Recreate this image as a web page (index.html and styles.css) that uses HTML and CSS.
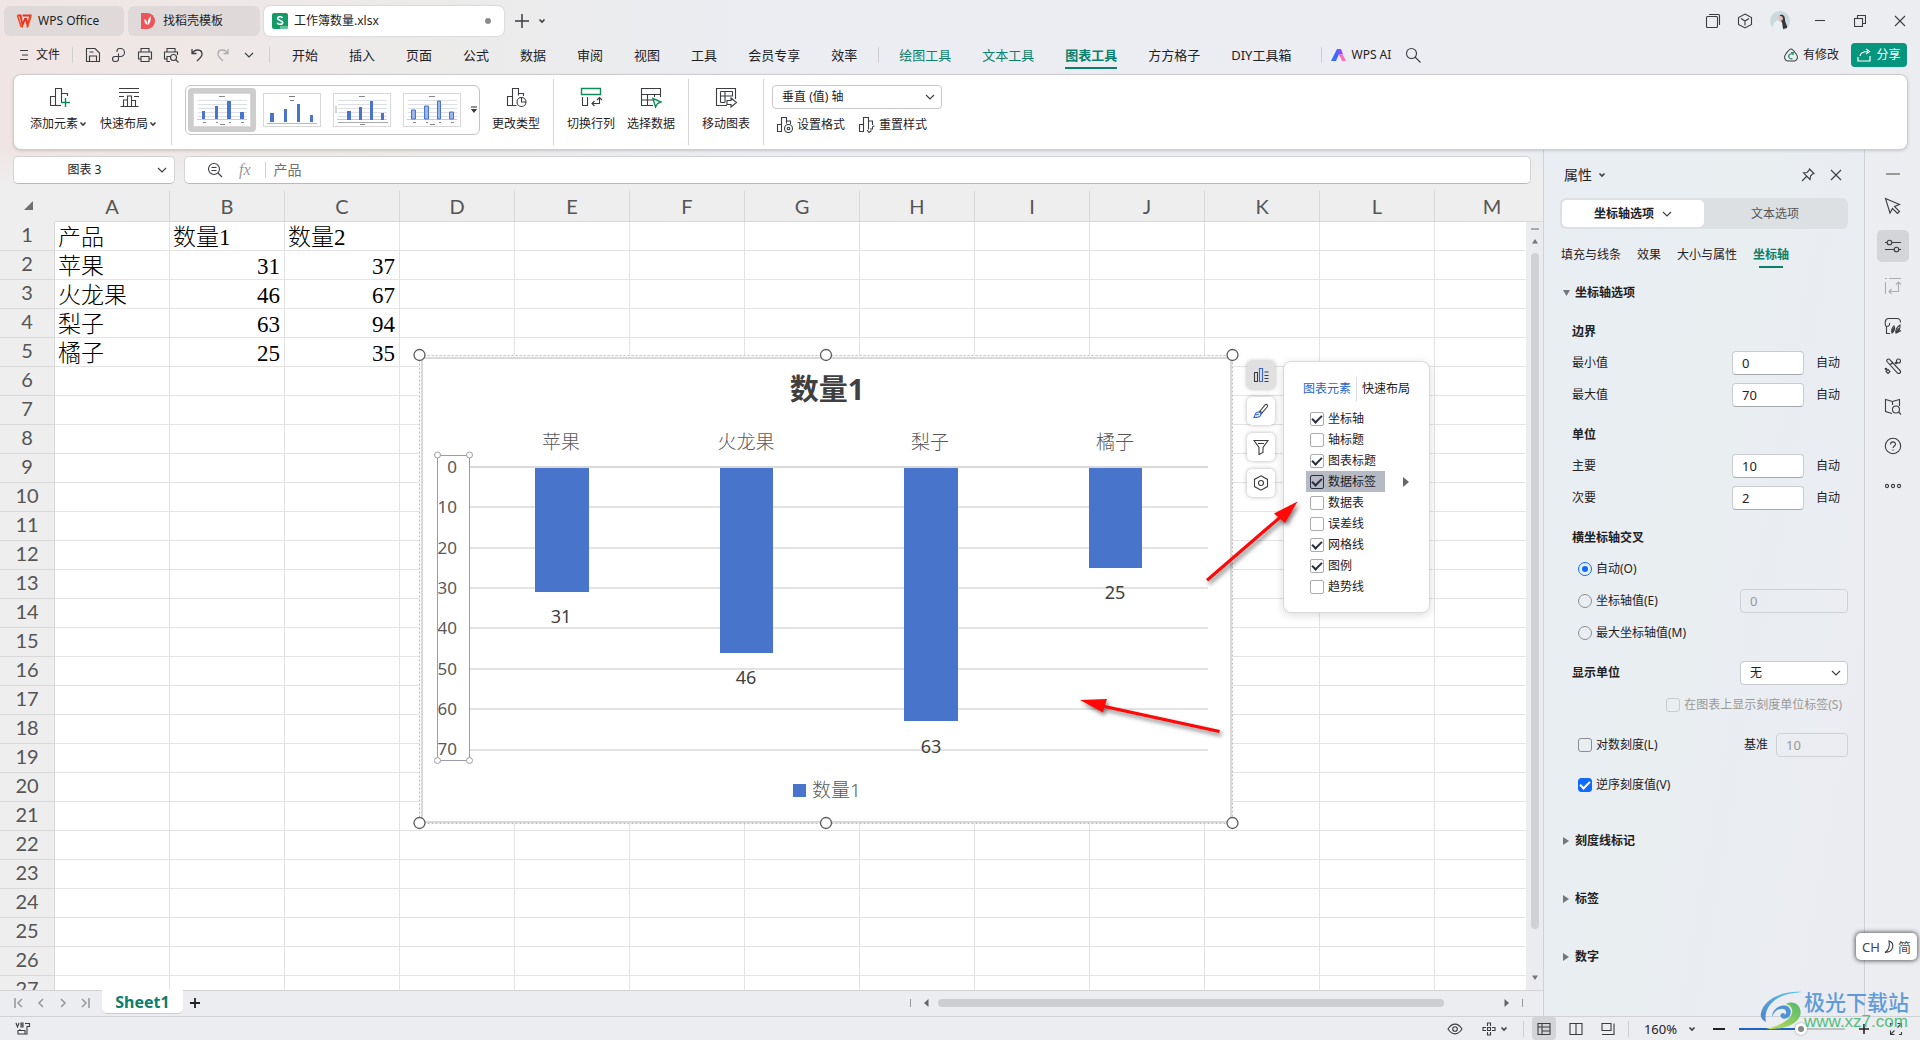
FILE: index.html
```html
<!DOCTYPE html>
<html lang="zh-CN">
<head>
<meta charset="utf-8">
<title>工作簿数量.xlsx - WPS Office</title>
<link rel="stylesheet" href="styles.css">
</head>
<body>
<svg class="defs" aria-hidden="true">
  <symbol id="chev" viewBox="0 0 10 10"><path d="M1 3l4 4 4-4"/></symbol>
  <symbol id="caret" viewBox="0 0 8 8"><path d="M1.500 2.500L4 5l2.500-2.500" stroke-width="1.600"/></symbol>
</svg>
<header class="titlebar">
  <button class="doc-tab home">
    <svg width="16" height="14" viewBox="0 0 16 14"><path d="M1.500 1.500h3L6.500 11 9 5h1l1.500 6L14.500 1.500H6.500" fill="none" stroke="#f0301e" stroke-width="1.900"/><path d="M1.500 1.500L5 12.500h1.500M10.500 12.500h1.200l3.300-11" fill="none" stroke="#fa4a1c" stroke-width="1.600"/></svg>
    <span>WPS Office</span>
  </button>
  <button class="doc-tab docer">
    <svg width="14" height="16" viewBox="0 0 14 16"><path d="M0 0h6a8 8 0 010 16H0z" fill="#ee5355"/><path d="M3.500 6c2 1 3 3 3 6-2.500-1-3.500-3-3-6zM9.500 3c.8 4-.3 7-2.300 9-1-3-.2-6 2.300-9z" fill="#fff"/></svg>
    <span>找稻壳模板</span>
  </button>
  <button class="doc-tab active">
    <svg width="16" height="16" viewBox="0 0 16 16"><rect width="16" height="16" rx="2" fill="#149a67"/><path d="M8 13h8v1a2 2 0 01-2 2H8z" fill="#5fc79b"/><path d="M10.500 5C10 3.300 5.600 3.200 5.600 5.500S10.700 7.200 10.700 9.500 5.800 11.800 5.200 9.800" fill="none" stroke="#fff" stroke-width="1.700"/></svg>
    <span>工作簿数量.xlsx</span><i class="dot"></i>
  </button>
  <button class="icon-btn" aria-label="新建"><svg class="ic" width="14" height="14" viewBox="0 0 14 14"><path d="M7 0v14M0 7h14" stroke-width="1.500"/></svg></button>
  <button class="icon-btn" aria-label="标签列表"><svg class="ic" width="8" height="8"><use href="#caret"/></svg></button>
  <div class="window-tools">
    <button class="icon-btn" aria-label="窗口"><svg class="ic" width="16" height="16" viewBox="0 0 16 16"><rect x="1.500" y="3.500" width="11" height="11" rx="1"/><path d="M4 1.500h9.500a1 1 0 011 1V12"/></svg></button>
    <button class="icon-btn" aria-label="应用"><svg class="ic" width="16" height="16" viewBox="0 0 16 16"><path d="M8 1l6.500 3.500v7L8 15l-6.500-3.500v-7zM4 5.500L8 8l4-2.500M8 8v4.500"/></svg></button>
    <button class="icon-btn avatar" aria-label="账户"><svg width="20" height="20" viewBox="0 0 20 20"><circle cx="10" cy="10" r="10" fill="#c9d9e0"/><path d="M3 17c0-5 2-7 6-8l4 4v7a10 10 0 01-10-3z" fill="#e9eff1"/><path d="M10 4c4-1 5 2 5 5s3 6 2 8l-4 1-1-7-3-2z" fill="#37343c"/><circle cx="10.500" cy="7.500" r="2.400" fill="#e8c3b4"/></svg></button>
    <button class="icon-btn win" aria-label="最小化"><svg class="ic" width="10" height="10" viewBox="0 0 10 10"><path d="M0 4.500h10"/></svg></button>
    <button class="icon-btn win" aria-label="还原"><svg class="ic" width="12" height="12" viewBox="0 0 12 12"><rect x=".5" y="3.500" width="8" height="8"/><path d="M3.500 3.500v-3h8v8h-3"/></svg></button>
    <button class="icon-btn win" aria-label="关闭"><svg class="ic" width="12" height="12" viewBox="0 0 12 12"><path d="M1 1l10 10M11 1L1 11"/></svg></button>
  </div>
</header>

<nav class="menubar">
  <button class="file-btn"><svg class="ic" width="10" height="12" viewBox="0 0 10 12"><path d="M0 1.500h8M2 6h6M0 10.500h8"/></svg>文件</button>
  <i class="vsep"></i>
  <div class="quick">
    <button class="icon-btn" aria-label="保存"><svg class="ic" width="16" height="16" viewBox="0 0 16 16"><path d="M1.500 1.500h8.500l4.500 4.500v8.500h-13zM4.500 14v-5h7v5M4.500 5h4"/></svg></button>
    <button class="icon-btn" aria-label="输出PDF"><svg class="ic" width="16" height="16" viewBox="0 0 16 16"><path d="M6 5V4a2.500 2.500 0 012.500-2.500h1a4 4 0 010 8H4a2.500 2.500 0 100 5h1a2.500 2.500 0 002.500-2.500V6.500"/></svg></button>
    <button class="icon-btn" aria-label="打印"><svg class="ic" width="16" height="16" viewBox="0 0 16 16"><path d="M4 5V1.500h8V5M4 12H1.500V5h13v7H12M4 9.500h8v5H4z"/></svg></button>
    <button class="icon-btn" aria-label="打印预览"><svg class="ic" width="16" height="16" viewBox="0 0 16 16"><path d="M4 5V1.500h8V5M4 12H1.500V5h13v3M7 14.500H4v-5h3"/><circle cx="10.500" cy="10.500" r="3"/><path d="M13 13l2.500 2.500"/></svg></button>
    <button class="icon-btn" aria-label="撤销"><svg class="ic" width="14" height="14" viewBox="0 0 14 14"><path d="M2 1v4.500h4.500M2 5.500C5 .5 12 1 12 6c0 3-3 5-5 7" stroke-width="1.300"/></svg></button>
    <button class="icon-btn faint" aria-label="恢复"><svg class="ic" width="14" height="14" viewBox="0 0 14 14"><path d="M12 1v4.500H7.500M12 5.500C9 .5 2 1 2 6c0 3 3 5 5 7" stroke-width="1.300"/></svg></button>
    <button class="icon-btn" aria-label="更多"><svg class="ic" width="10" height="10"><use href="#chev"/></svg></button>
  </div>
  <i class="vsep"></i>
  <div class="menu-tabs">
    <a href="#">开始</a><a href="#">插入</a><a href="#">页面</a><a href="#">公式</a><a href="#">数据</a><a href="#">审阅</a><a href="#">视图</a><a href="#">工具</a><a href="#">会员专享</a><a href="#">效率</a>
  </div>
  <i class="vsep"></i>
  <div class="menu-tabs last">
    <a href="#" class="tool">绘图工具</a><a href="#" class="tool">文本工具</a><a href="#" class="tool on">图表工具</a><a href="#">方方格子</a><a href="#">DIY工具箱</a>
  </div>
  <i class="vsep"></i>
  <button class="ai-btn"><svg width="16" height="12" viewBox="0 0 16 12"><path d="M6 0h4L5 12H0z" fill="#3a6bff"/><path d="M6 0h4l2 5.500H7.500z" fill="#8a4dff"/><path d="M7.500 5.500h4.300L15 12h-4L9.500 8.500z" fill="#ff6fc0"/></svg>WPS AI</button>
  <button class="icon-btn search" aria-label="搜索"><svg class="ic" width="16" height="16" viewBox="0 0 16 16"><circle cx="6.500" cy="6.500" r="5"/><path d="M10 10l5.500 5.500"/></svg></button>
  <div class="menu-right">
    <button class="sync"><svg class="ic" width="16" height="14" viewBox="0 0 16 14"><path d="M4.500 13a4 4 0 01-2-6.500C4 4.500 6 1 8 1s4 3.500 5.500 5.500a4 4 0 01-2 6.500z"/><path d="M10 6.500A2.500 2.500 0 109.500 10.500M8 4.500h2.200v2.200" stroke="#17845f"/></svg>有修改</button>
    <button class="share"><svg class="ic" width="14" height="14" viewBox="0 0 14 14"><path d="M3 8c.5-3 3-4.500 8-4.500M9 1l3.500 2.500L9 6M1 9v4h12V8" stroke="#fff" stroke-width="1.200"/></svg>分享</button>
  </div>
</nav>

<section class="ribbon">
  <div class="group">
    <button class="rbtn"><svg class="ic" width="24" height="24" viewBox="0 0 24 24"><path d="M3.500 11.500h5v9h-5zM8.500 20V3.500h6v14M14.500 8.500h6V11"/><path d="M8.500 20.500H14"/><path d="M18.500 13v9M14 17.500h9" stroke="#0f8a5a" stroke-width="1.400"/></svg><span>添加元素<svg class="ic" width="10" height="8" viewBox="0 0 8 8"><use href="#caret" width="8" height="8"/></svg></span></button>
    <button class="rbtn"><svg class="ic" width="24" height="24" viewBox="0 0 24 24"><path d="M2 3.500h20M2 7.500h20M2 11.500h5M17 11.500h5M3.500 21.500h18M6.500 21v-6h4v6M10.500 15v-4h4v10M14.500 15.500h4v6"/></svg><span>快速布局<svg class="ic" width="10" height="8" viewBox="0 0 8 8"><use href="#caret" width="8" height="8"/></svg></span></button>
  </div>
  <div class="group">
    <div class="gallery">
      <button class="thumb on" aria-label="样式 1"><svg width="56" height="32" viewBox="0 0 56 32"><use href="#thumb-lines"/><path d="M8 25v-8h3v8zM21 25V12h3v13zM33 25V7h4v18zM46 25v-7h4v7z" fill="#4874cb"/></svg></button>
      <button class="thumb" aria-label="样式 2"><svg width="56" height="32" viewBox="0 0 56 32"><path d="M3 29.500h50" stroke="#bbb"/><path d="M25 2.500h6M26 6.500h4" stroke="#777"/><path d="M6 28v-9h4v9zM20 28V15h3v13zM33 28V10h3v18zM46 28v-7h3v7z" fill="#4874cb"/></svg></button>
      <button class="thumb" aria-label="样式 3"><svg width="56" height="32" viewBox="0 0 56 32"><use href="#thumb-lines"/><path d="M4 28.500h50M2 12v7" stroke="#aaa"/><path d="M13 26V17h4v9zM25 26V13h3v13zM36 26V7h3v19zM47 26v-7h3v7z" fill="#4874cb"/></svg></button>
      <button class="thumb" aria-label="样式 4"><svg width="56" height="32" viewBox="0 0 56 32"><use href="#thumb-lines"/><path d="M7.500 25v-9h4v9zM20.500 25V12h4v13zM33.500 25V7h3v18zM45.500 25v-7h4v7z" fill="#9db6ea" stroke="#4874cb"/></svg></button>
      <button class="more" aria-label="更多样式"><svg class="ic" width="8" height="8" viewBox="0 0 8 8"><path d="M1 1h6"/><path d="M2 3.500h4L4 6z" fill="#333"/></svg></button>
    </div>
    <button class="rbtn"><svg class="ic" width="24" height="24" viewBox="0 0 24 24"><path d="M3.500 11.500h5v9h-5zM8.500 20V3.500h6v7M14.500 8.500h5V11M8.500 20.500h4"/><circle cx="17.500" cy="17" r="4.500"/><path d="M17.500 12.500V17H22"/></svg><span>更改类型</span></button>
  </div>
  <div class="group">
    <button class="rbtn"><svg class="ic" width="24" height="24" viewBox="0 0 24 24"><path d="M2.500 3.500h19v6h-19z" stroke="#0f8a5a" stroke-width="1.400"/><path d="M3.500 12v8.500h5V12M13 18.500h7.500V13M18 15l2.500-2.500L23 15M15.500 16L13 18.500l2.500 2.500"/></svg><span>切换行列</span></button>
    <button class="rbtn"><svg class="ic" width="24" height="24" viewBox="0 0 24 24"><path d="M14 20.500H2.500v-17h19V12M2.500 9.500h19M2.500 15H14M8.500 9.500v11M15.500 9.500V12"/><path d="M14 13.500l8 3.500-3.500 1.500L16.500 22z" stroke="#0f8a5a" stroke-width="1.400"/></svg><span>选择数据</span></button>
  </div>
  <div class="group">
    <button class="rbtn"><svg class="ic" width="24" height="24" viewBox="0 0 24 24"><path d="M13 20.500H2.500v-17h19V14M6.500 6.500h12M6.500 6.500v11M11 6.500v11M6.500 11h12V6.500M6.500 17.500H11M13 15.500h4V13l5.500 4.500L17 22v-2.500h-4z"/></svg><span>移动图表</span></button>
  </div>
  <div class="group format">
    <div class="select axis"><select aria-label="图表元素"><option>垂直 (值) 轴</option></select><svg class="ic" width="10" height="10"><use href="#chev"/></svg></div>
    <div class="row">
      <button><svg class="ic" width="18" height="18" viewBox="0 0 18 18"><path d="M1.500 8.500h4v7h-4zM5.500 15V1.500h5v6M10.500 5h4v3"/><circle cx="12.500" cy="12.500" r="4"/><circle cx="12.500" cy="12.500" r="1.300"/></svg>设置格式</button>
      <button><svg class="ic" width="18" height="18" viewBox="0 0 18 18"><path d="M1.500 8.500h4v7h-4zM5.500 15V1.500h5v12M10.500 5h4v4M12 13h2.500v-2a2 2 0 012-1M9 14l2 2.500 2.500-2"/></svg>重置样式</button>
    </div>
  </div>
</section>
<svg class="defs" aria-hidden="true"><symbol id="thumb-lines" viewBox="0 0 56 32"><path d="M4 6.500h49M4 10.500h49M4 14.500h49M4 18.500h49M4 22.500h49" stroke="#dcdfe6"/><path d="M3 25.500h50" stroke="#c6cad4"/><path d="M25 2.500h6M9 28.500h3M22 28.500h2M35 28.500h2M47 28.500h3M26 30.500h5" stroke="#888"/></symbol></svg>

<div class="work">
  <main class="main">
    <div class="formula-row">
      <div class="namebox"><input aria-label="名称框" value="图表 3"><svg class="ic" width="10" height="10"><use href="#chev"/></svg></div>
      <div class="formula">
        <svg class="ic" width="16" height="16" viewBox="0 0 16 16"><circle cx="7" cy="7" r="5.500"/><path d="M4.500 5.500h5M4.500 8.500h5M11 11l4 4"/></svg>
        <span class="fx">fx</span><i class="vsep"></i>
        <input aria-label="编辑栏" value="产品">
      </div>
    </div>
    <div class="sheet-wrap">
      <div class="sheet">
        <table class="grid">
          <thead><tr><th class="corner"><svg width="10" height="10" viewBox="0 0 10 10"><path d="M10 0v9H1z" fill="#707070"/></svg><th>A<th>B<th>C<th>D<th>E<th>F<th>G<th>H<th>I<th>J<th>K<th>L<th>M</thead>
          <tbody>
          <tr><th>1<td>产品<td>数量1<td>数量2<td><td><td><td><td><td><td><td><td><td>
          <tr><th>2<td>苹果<td class="n">31<td class="n">37<td><td><td><td><td><td><td><td><td><td>
          <tr><th>3<td>火龙果<td class="n">46<td class="n">67<td><td><td><td><td><td><td><td><td><td>
          <tr><th>4<td>梨子<td class="n">63<td class="n">94<td><td><td><td><td><td><td><td><td><td>
          <tr><th>5<td>橘子<td class="n">25<td class="n">35<td><td><td><td><td><td><td><td><td><td>
          <tr><th>6<td><td><td><td><td><td><td><td><td><td><td><td><td>
          <tr><th>7<td><td><td><td><td><td><td><td><td><td><td><td><td>
          <tr><th>8<td><td><td><td><td><td><td><td><td><td><td><td><td>
          <tr><th>9<td><td><td><td><td><td><td><td><td><td><td><td><td>
          <tr><th>10<td><td><td><td><td><td><td><td><td><td><td><td><td>
          <tr><th>11<td><td><td><td><td><td><td><td><td><td><td><td><td>
          <tr><th>12<td><td><td><td><td><td><td><td><td><td><td><td><td>
          <tr><th>13<td><td><td><td><td><td><td><td><td><td><td><td><td>
          <tr><th>14<td><td><td><td><td><td><td><td><td><td><td><td><td>
          <tr><th>15<td><td><td><td><td><td><td><td><td><td><td><td><td>
          <tr><th>16<td><td><td><td><td><td><td><td><td><td><td><td><td>
          <tr><th>17<td><td><td><td><td><td><td><td><td><td><td><td><td>
          <tr><th>18<td><td><td><td><td><td><td><td><td><td><td><td><td>
          <tr><th>19<td><td><td><td><td><td><td><td><td><td><td><td><td>
          <tr><th>20<td><td><td><td><td><td><td><td><td><td><td><td><td>
          <tr><th>21<td><td><td><td><td><td><td><td><td><td><td><td><td>
          <tr><th>22<td><td><td><td><td><td><td><td><td><td><td><td><td>
          <tr><th>23<td><td><td><td><td><td><td><td><td><td><td><td><td>
          <tr><th>24<td><td><td><td><td><td><td><td><td><td><td><td><td>
          <tr><th>25<td><td><td><td><td><td><td><td><td><td><td><td><td>
          <tr><th>26<td><td><td><td><td><td><td><td><td><td><td><td><td>
          <tr><th>27<td><td><td><td><td><td><td><td><td><td><td><td><td>
          </tbody>
        </table>

        <svg class="chart" width="830" height="484" viewBox="412 348 830 484">
          <rect x="419.500" y="355.500" width="813" height="468" fill="#fff" stroke="#bdbdbd" stroke-dasharray="2 2"/>
          <rect x="422" y="358" width="809" height="464" fill="#fff" stroke="#d9d9d9" stroke-width="2"/>
          <text class="c-title" x="827" y="400">数量1</text>
          <g class="c-cat"><text x="561" y="449">苹果</text><text x="746" y="449">火龙果</text><text x="930" y="449">梨子</text><text x="1115" y="449">橘子</text></g>
          <path d="M470 507h738M470 548h738M470 588h738M470 628h738M470 669h738M470 709h738M470 750h738" stroke="#e3e3e3" stroke-width="2"/>
          <path d="M470 467h738" stroke="#d9d9d9" stroke-width="2"/>
          <g fill="#4874cb"><rect x="535" y="468" width="54" height="124"/><rect x="720" y="468" width="53" height="185"/><rect x="904" y="468" width="54" height="253"/><rect x="1089" y="468" width="53" height="100"/><rect x="793" y="784" width="13" height="13"/></g>
          <g class="c-axis"><text x="457" y="473">0</text><text x="457" y="513">10</text><text x="457" y="554">20</text><text x="457" y="594">30</text><text x="457" y="634">40</text><text x="457" y="675">50</text><text x="457" y="715">60</text><text x="457" y="755">70</text></g>
          <g class="c-val"><text x="561" y="623">31</text><text x="746" y="684">46</text><text x="931" y="753">63</text><text x="1115" y="599">25</text></g>
          <text class="c-legend" x="812" y="797">数量1</text>
          <g fill="#fff" stroke="#9c9ca6"><path d="M437.500 455.500h32v305h-32z" fill="none"/><circle cx="437.500" cy="455" r="3"/><circle cx="469.500" cy="455" r="3"/><circle cx="437.500" cy="760.500" r="3"/><circle cx="469.500" cy="760.500" r="3"/></g>
          <g fill="#fff" stroke="#5c5c5c" stroke-width="1.300"><circle cx="419.500" cy="355" r="5.500"/><circle cx="826" cy="355" r="5.500"/><circle cx="1232.500" cy="355" r="5.500"/><circle cx="419.500" cy="823" r="5.500"/><circle cx="826" cy="823" r="5.500"/><circle cx="1232.500" cy="823" r="5.500"/></g>
        </svg>

        <div class="chart-tools">
          <button class="on" aria-label="图表元素"><svg class="ic" width="16" height="16" viewBox="0 0 16 16"><path d="M1.500 5.500h3v9h-3z"/><path d="M6.500 1.500h3v13h-3z" stroke="#3567d6"/><path d="M11.500 5h4M11.500 8.500h4M11.500 11.500h4M11.500 14.500h4"/></svg></button>
          <button aria-label="图表样式"><svg class="ic" width="16" height="16" viewBox="0 0 16 16"><path d="M7 8l5.500-6.500a1.500 1.500 0 012 2L9 10z"/><path d="M1 14.500c1-1 .5-5 4-5.500 2-.2 3.500 1.500 2.500 3.500-1 2-4.500 2-6.500 2zM6 8l3 3M3 12l3-1" stroke="#3567d6"/></svg></button>
          <button aria-label="图表筛选"><svg class="ic" width="16" height="16" viewBox="0 0 16 16"><path d="M1 1.500h14L10 8.500v5l-4 2v-7zM5 4.500h6"/></svg></button>
          <button aria-label="设置"><svg class="ic" width="16" height="16" viewBox="0 0 16 16"><path d="M8 .8l6.500 3.600v7.200L8 15.200l-6.500-3.600V4.400z"/><circle cx="8" cy="8" r="2.500"/></svg></button>
        </div>

        <div class="elements">
          <div class="el-tabs"><a href="#" class="on">图表元素</a><i></i><a href="#">快速布局</a></div>
          <label><input type="checkbox" checked>坐标轴</label>
          <label><input type="checkbox">轴标题</label>
          <label><input type="checkbox" checked>图表标题</label>
          <div class="el-hot"><label class="hot"><input type="checkbox" checked>数据标签</label><svg width="6" height="10" viewBox="0 0 6 10"><path d="M0 0l6 5-6 5z" fill="#666"/></svg></div>
          <label><input type="checkbox">数据表</label>
          <label><input type="checkbox">误差线</label>
          <label><input type="checkbox" checked>网格线</label>
          <label><input type="checkbox" checked>图例</label>
          <label><input type="checkbox">趋势线</label>
        </div>

        <svg class="arrows" width="240" height="250" viewBox="1070 490 240 250">
          <g fill="#fe0808"><path d="M1297.500 501.500L1285 523l-4.500-4L1208 581.500l-2-2.500 72-62-4-3.500z"/><path d="M1080 700l27-1-2 6 115 25-1 3-115-25-1 4.500z"/></g>
        </svg>
      </div>
      <div class="vscroll"><i class="head"></i><i class="dash"></i><svg width="8" height="6" viewBox="0 0 8 6"><path d="M1 5.500h6L4 1z" fill="#777"/></svg><i class="thumb-v"></i><svg width="8" height="6" viewBox="0 0 8 6"><path d="M1 .5h6L4 5z" fill="#777"/></svg></div>
    </div>
    <div class="sheetbar">
      <div class="nav-btns">
        <button aria-label="第一张"><svg width="10" height="10" viewBox="0 0 10 10"><path d="M1 0v10M8 1L4 5l4 4"/></svg></button>
        <button aria-label="上一张"><svg width="10" height="10" viewBox="0 0 10 10"><path d="M7 1L3 5l4 4"/></svg></button>
        <button aria-label="下一张"><svg width="10" height="10" viewBox="0 0 10 10"><path d="M3 1l4 4-4 4"/></svg></button>
        <button aria-label="最后一张"><svg width="10" height="10" viewBox="0 0 10 10"><path d="M9 0v10M2 1l4 4-4 4"/></svg></button>
      </div>
      <button class="sheet-tab">Sheet1</button>
      <button class="add-sheet" aria-label="新建工作表"><svg width="10" height="10" viewBox="0 0 10 10"><path d="M5 0v10M0 5h10" stroke="#222" stroke-width="1.800"/></svg></button>
      <div class="hscroll"><i class="bar"></i><svg width="6" height="8" viewBox="0 0 6 8"><path d="M5.500 0v8L1 4z" fill="#666"/></svg><div class="track"><i class="thumb-h"></i></div><svg width="6" height="8" viewBox="0 0 6 8"><path d="M.5 0v8L5 4z" fill="#666"/></svg><i class="bar"></i></div>
    </div>
  </main>

  <aside class="pane">
    <div class="pane-title"><span>属性</span><svg class="ic" width="8" height="8"><use href="#caret"/></svg>
      <button class="pin" aria-label="固定"><svg class="ic" width="14" height="14" viewBox="0 0 14 14"><path d="M8.500 1L13 5.500l-1.500.5-2 2-.5 3.500L2.500 5 6 4.500l2-2zM5.500 8.500L1 13"/></svg></button>
      <button aria-label="关闭窗格"><svg class="ic" width="12" height="12" viewBox="0 0 12 12"><path d="M1 1l10 10M11 1L1 11"/></svg></button></div>
    <div class="segment"><button class="on">坐标轴选项<svg class="ic" width="10" height="10"><use href="#chev"/></svg></button><button>文本选项</button></div>
    <div class="pane-tabs"><a href="#">填充与线条</a><a href="#">效果</a><a href="#">大小与属性</a><a href="#" class="on">坐标轴</a></div>
    <h2 class="sec open">坐标轴选项</h2>
    <div class="form">
      <h3>边界</h3>
      <div class="line"><label for="min">最小值</label><input class="box" id="min" value="0"><span class="auto">自动</span></div>
      <div class="line"><label for="max">最大值</label><input class="box" id="max" value="70"><span class="auto">自动</span></div>
      <h3>单位</h3>
      <div class="line"><label for="major">主要</label><input class="box" id="major" value="10"><span class="auto">自动</span></div>
      <div class="line"><label for="minor">次要</label><input class="box" id="minor" value="2"><span class="auto">自动</span></div>
      <h3>横坐标轴交叉</h3>
      <div class="line opt"><label><input type="radio" name="cross" checked>自动(O)</label></div>
      <div class="line opt"><label><input type="radio" name="cross">坐标轴值(E)</label><input class="box wide" aria-label="坐标轴值" value="0" disabled></div>
      <div class="line opt"><label><input type="radio" name="cross">最大坐标轴值(M)</label></div>
      <div class="line unit"><label class="strong" for="unit">显示单位</label><div class="select"><select id="unit"><option>无</option></select><svg class="ic" width="10" height="10"><use href="#chev"/></svg></div></div>
      <div class="line end"><label class="off"><input type="checkbox" disabled>在图表上显示刻度单位标签(S)</label></div>
      <div class="line opt gap"><label><input type="checkbox">对数刻度(L)</label><label class="base" for="base">基准</label><input class="box" id="base" value="10" disabled></div>
      <div class="line opt gap"><label><input type="checkbox" checked>逆序刻度值(V)</label></div>
    </div>
    <h2 class="sec">刻度线标记</h2>
    <h2 class="sec">标签</h2>
    <h2 class="sec">数字</h2>
  </aside>

  <nav class="rail">
    <button class="fold" aria-label="收起"><svg width="14" height="4" viewBox="0 0 14 4"><path d="M0 2h14" stroke="#999" stroke-width="2"/></svg></button>
    <button aria-label="选择"><svg class="ic" width="18" height="18" viewBox="0 0 18 18"><path d="M1.500 1.500l14 6-5 2 5 5-2 2-5-5-2.500 4.500z"/></svg></button>
    <button class="on" aria-label="属性"><svg class="ic" width="18" height="18" viewBox="0 0 18 18"><path d="M1 5.500h2M8 5.500h9M1 12.500h9M15 12.500h2"/><circle cx="5.500" cy="5.500" r="2.300"/><circle cx="12.500" cy="12.500" r="2.300"/></svg></button>
    <button class="faint" aria-label="转换"><svg class="ic" width="18" height="18" viewBox="0 0 18 18"><path d="M1 1.500h2M5 1.500h12M1.500 5v12M5 14.500h9.500V5M12 7.500L14.500 5 17 7.500M7.500 12L5 14.500 7.500 17"/></svg></button>
    <button aria-label="素材"><svg class="ic" width="18" height="18" viewBox="0 0 18 18"><path d="M6 16.500H2.500V10M2.500 10C.5 8 .5 2 4 1.500h9c2 0 3.500 1.500 3.500 4M2.500 9.500c2.500 0 3.500-1.500 3-3.500"/><path d="M8 16c-1-3 0-5 2-7 1 2 .5 5-2 7zM12 16c-1-4 1-6 4-8 .5 3-1 6-4 8zM12.500 16l4.500-2.500M8.500 15l1-4M12.500 15l2-4"/></svg></button>
    <button aria-label="美化"><svg class="ic" width="18" height="18" viewBox="0 0 18 18"><path d="M3 4.500a1.500 1.500 0 013-1.500l10 10.500a1.700 1.700 0 01-2.500 2.500zM6 8l3-3"/><circle cx="14.500" cy="4" r="2"/><path d="M2 14.500l2-2 2 2-2 2z"/><circle cx="2" cy="12" r=".8"/><circle cx="12" cy="6" r=".8"/></svg></button>
    <button aria-label="查找"><svg class="ic" width="18" height="18" viewBox="0 0 18 18"><path d="M8 16.500l-6.500-2v-12l7 2 7-2V9M8.500 4.500V8"/><circle cx="12" cy="12.500" r="3.500"/><path d="M14.500 15l2.500 2.500"/></svg></button>
    <button aria-label="帮助"><svg class="ic" width="18" height="18" viewBox="0 0 18 18"><circle cx="9" cy="9" r="7.700"/><path d="M6.500 7.500c0-3.500 5-3.300 5-.3 0 1.800-2.500 1.800-2.500 3.800M9 12.500v1.300"/></svg></button>
    <button aria-label="更多"><svg class="ic" width="18" height="6" viewBox="0 0 18 6"><circle cx="3" cy="3" r="1.600"/><circle cx="9" cy="3" r="1.600"/><circle cx="15" cy="3" r="1.600"/></svg></button>
  </nav>
</div>

<footer class="status">
  <svg class="ic" width="16" height="14" viewBox="0 0 16 14"><path d="M1 1l1.500 4L4 1M6 1v4h2V1zM6 3h2M10 1.500h4.500v3H12V12H3V8.500h7V12M5 8.500V7"/></svg>
  <div class="status-right">
    <button class="s-eye" aria-label="护眼模式"><svg class="ic" width="16" height="12" viewBox="0 0 16 12"><path d="M1 6c4-6.500 10-6.500 14 0-4 6.500-10 6.500-14 0z"/><circle cx="8" cy="6" r="2.300"/></svg></button>
    <button class="s-focus" aria-label="阅读模式"><svg class="ic" width="14" height="14" viewBox="0 0 14 14"><path d="M5.500 4V1h3v3M5.500 10v3h3v-3M4 5.500H1v3h3M10 5.500h3v3h-3M5.500 5.500h3v3h-3z"/></svg><svg class="ic" width="8" height="8"><use href="#caret"/></svg></button>
    <i class="vsep"></i>
    <button class="view on" aria-label="普通视图"><svg class="ic" width="14" height="14" viewBox="0 0 14 14"><path d="M1 1.500h12v11H1zM1 5h12M5 1.500v11M5 9h8"/></svg></button>
    <button class="view" aria-label="页面布局"><svg class="ic" width="14" height="14" viewBox="0 0 14 14"><path d="M1 1.500h12v11H1zM7 1.500v11"/></svg></button>
    <button class="view" aria-label="分页预览"><svg class="ic" width="14" height="14" viewBox="0 0 14 14"><path d="M1 1.500h9v7H1zM13 1.500v11H1"/></svg></button>
    <i class="vsep"></i>
    <button class="pct">160%<svg class="ic" width="8" height="8"><use href="#caret"/></svg></button>
    <button aria-label="缩小"><svg width="12" height="2" viewBox="0 0 12 2"><path d="M0 1h12" stroke="#222" stroke-width="2"/></svg></button>
    <input type="range" class="zoom" aria-label="显示比例" min="0" max="100" value="60">
    <button aria-label="放大"><svg width="10" height="10" viewBox="0 0 10 10"><path d="M5 0v10M0 5h10" stroke="#222" stroke-width="1.600"/></svg></button>
    <button class="full" aria-label="全屏"><svg class="ic" width="14" height="14" viewBox="0 0 14 14"><path d="M8.500 1.500h4v4M5.500 12.500h-4v-4M12.500 1.500l-4 4M1.500 12.500l4-4M1.500 4V1.500H4M12.500 10v2.500H10"/></svg></button>
  </div>
</footer>

<div class="ime">CH<svg class="ic" width="12" height="14" viewBox="0 0 12 14"><path d="M6 1c6 2 5 11-4 11.500C6 10 7 6 6 1z"/></svg>简</div>
<div class="mark">
  <svg width="44" height="40" viewBox="0 0 44 40"><defs><linearGradient id="mk1" x1="1" y1="0" x2="0" y2="1"><stop offset="0" stop-color="#5ccbee"/><stop offset="1" stop-color="#4a83c9"/></linearGradient><linearGradient id="mk2" x1="1" y1="0" x2="0" y2="1"><stop offset="0" stop-color="#52b96c"/><stop offset="1" stop-color="#c4dd58"/></linearGradient></defs><path d="M43 1C25-1 4 7 1 22c-1 4 1 7 5 9-2-9 2-19 14-25 8-4 15-4 23-5z" fill="url(#mk1)"/><path d="M26 13c9-5 17 3 14 12-4 10-20 14-34 13 12-3 24-8 26-16 1-5-2-8-6-9z" fill="url(#mk2)"/><path d="M12 26c0-8 8-13 15-11 5 2 5 10 0 12-4 2-8-1-6-4 2-2 4-1 4 1 3-3 0-7-4-6-4 0-7 3-9 8z" fill="#4f93d4"/></svg>
  <div><b>极光下载站</b><span>www.xz7.com</span></div>
</div>
</body>
</html>
```
FILE: styles.css
```css
* { box-sizing: border-box; }
body {
  margin: 0; height: 100vh; overflow: hidden; position: relative;
  display: flex; flex-direction: column;
  font: 12px/16px "Noto Sans", "Noto Sans CJK SC", sans-serif; color: #1f2124;
  background: linear-gradient(90deg, #f0e5e4 0, #ecebea 22%, #ebedf3 42%, #ecedf1 100%);
}
button, input, select { font: inherit; color: inherit; margin: 0; }
button { border: 0; padding: 0; background: none; display: inline-flex; align-items: center; justify-content: center; }
a { color: inherit; text-decoration: none; }
svg { flex: none; display: block; }
.ic { fill: none; stroke: #3b3d40; stroke-width: 1.1; }
.defs { position: absolute; width: 0; height: 0; }
.vsep { width: 1px; height: 16px; background: #cfcfd2; flex: none; }
.faint .ic { stroke: #adadb0; }

/* title bar */
.titlebar { display: flex; align-items: center; height: 38px; padding: 4px 10px 0 4px; flex: none; }
.doc-tab { height: 30px; border-radius: 6px; background: #dfdad9; justify-content: flex-start; padding: 0 12px; gap: 6px; margin-right: 4px; }
.home { width: 120px; }
.docer { width: 132px; padding-left: 13px; gap: 8px; }
.doc-tab.active { width: 240px; background: #fff; padding: 0 13px 0 8px; box-shadow: 0 0 2px #b5b5b5; margin-right: 8px; }
.dot { width: 6px; height: 6px; border-radius: 3px; background: #8d8d8d; margin-left: auto; }
.icon-btn { width: 20px; height: 20px; }
.window-tools { margin-left: auto; display: flex; gap: 12px; }
.avatar { margin-left: 3px; }
.win { margin-left: 8px; }

/* menu bar */
.menubar { display: flex; align-items: center; height: 34px; padding: 0 13px 0 20px; flex: none; }
.file-btn { width: 52px; justify-content: flex-start; gap: 6px; }
.quick { display: flex; gap: 6px; padding: 0 10px; }
.menu-tabs { display: flex; gap: 31px; padding: 0 21px 0 22px; font-size: 13px; line-height: 24px; }
.menu-tabs.last { padding: 0 30px 0 20px; }
.menu-tabs a { white-space: nowrap; border-bottom: 2px solid transparent; border-top: 2px solid transparent; }
.menu-tabs .tool { color: #0b7f6b; }
.menu-tabs .on { font-weight: 700; border-bottom-color: #0b7f6b; }
.ai-btn { gap: 4px; margin-left: 9px; }
.search { margin-left: 12px; }
.menu-right { margin-left: auto; display: flex; align-items: center; gap: 12px; }
.sync { gap: 4px; }
.share { width: 56px; height: 24px; gap: 5px; border-radius: 4px; background: #05967d; color: #fff; }

/* ribbon */
.ribbon { margin: 2px 12px 0 13px; height: 76px; flex: none; display: flex; align-items: center; padding-left: 3px; background: #fff; border: 1px solid #cdcdd0; border-radius: 8px; box-shadow: 0 1px 3px rgba(0,0,0,.15); position: relative; }
.group { display: flex; gap: 12px; height: 66px; padding: 6px 13px 0; border-right: 1px solid #d6d6d6; align-items: flex-start; }
.group:last-child { border: 0; }
.rbtn { flex-direction: column; gap: 7px; white-space: nowrap; }
.rbtn span { display: flex; align-items: center; height: 16px; }
.gallery { display: flex; align-items: center; width: 295px; height: 50px; border: 1px solid #c4c4c6; border-radius: 6px; padding-left: 2px; gap: 2px; }
.thumb { width: 68px; height: 44px; border-radius: 4px; }
.thumb svg { outline: 1px solid #d8d8d8; background: #fff; }
.thumb.on { background: #cdcdcd; }
.more { flex: 1; height: 40px; }
.group.format { flex-direction: column; gap: 7px; padding: 6px 0 0 8px; }
.format .row { display: flex; gap: 13px; padding-left: 4px; }
.format .row button { gap: 3px; height: 18px; }
.select { position: relative; width: 108px; height: 24px; }
.select.axis { width: 170px; }
.select select { width: 100%; height: 100%; appearance: none; background: #fff; border: 1px solid #c6c8cc; border-radius: 4px; padding: 0 9px; }
.select svg { position: absolute; right: 7px; top: 7px; }

/* work area */
.work { flex: 1; min-height: 0; display: flex; }
.main { flex: 1; min-width: 0; display: flex; flex-direction: column; }
.formula-row { display: flex; gap: 9px; padding: 6px 12px 7px 13px; flex: none; background: linear-gradient(180deg, transparent, #eee 85%); }
.namebox, .formula { height: 28px; background: #fff; border: 1px solid #d2d3d5; border-bottom-color: #b8b9bb; border-radius: 5px; display: flex; align-items: center; }
.namebox { width: 162px; padding-right: 7px; }
.namebox input { flex: 1; min-width: 0; border: 0; background: none; text-align: center; padding: 0 2px 0 0; }
.formula { flex: 1; padding-left: 22px; }
.fx { font: italic 16px/20px "Liberation Serif", serif; color: #999; margin: 0 14px 0 16px; }
.formula input { flex: 1; border: 0; background: none; font-size: 14px; color: #707070; padding: 0 8px; }
.sheet-wrap { flex: 1; min-height: 0; display: flex; }
.sheet { flex: 1; min-width: 0; position: relative; overflow: hidden; background: #fff; }
.grid { table-layout: fixed; width: 1550px; border-collapse: separate; border-spacing: 0; }
.grid th { width: 115px; height: 31px; padding: 0; background: #eee; font: 20px/28px Lato, sans-serif; color: #555; border-right: 1px solid #d8d8d8; border-bottom: 1px solid #d8d8d8; }
.grid thead .corner, .grid tbody th { width: 55px; }
.grid thead .corner { border-color: #eee; }
.corner svg { margin-left: 23px; }
.grid tbody th { height: 29px; line-height: 24px; padding-bottom: 4px; }
.grid td { height: 29px; padding: 4px 4px 0 3px; border-right: 1px solid #e3e3e3; border-bottom: 1px solid #e3e3e3; font: 300 23px/24px "Liberation Serif", "Noto Sans CJK SC", serif; color: #000; white-space: nowrap; }
.grid td.n { text-align: right; }

/* chart objects float over the cells */
.chart { position: absolute; left: 412px; top: 157px; font-family: "Noto Sans", "Noto Sans CJK SC", sans-serif; }
.c-title { font-size: 29px; font-weight: 700; text-anchor: middle; fill: #404040; }
.c-cat { font-size: 19px; font-weight: 300; text-anchor: middle; fill: #595959; }
.c-axis { font-size: 17px; text-anchor: end; fill: #595959; }
.c-val { font-size: 18px; text-anchor: middle; fill: #404040; }
.c-legend { font-size: 19px; font-weight: 300; fill: #595959; }
.chart-tools { position: absolute; left: 1247px; top: 170px; display: flex; flex-direction: column; gap: 8px; }
.chart-tools button { width: 28px; height: 28px; background: #fff; border-radius: 5px; box-shadow: 0 0 4px rgba(0,0,0,.3); }
.chart-tools .on { background: #e0e0e0; }
.elements { position: absolute; left: 1283px; top: 170px; width: 147px; height: 252px; background: #fff; border: 1px solid #d9d9d9; border-radius: 8px; box-shadow: 0 2px 10px rgba(0,0,0,.15); padding: 15px 0 0 19px; display: flex; flex-direction: column; align-items: flex-start; }
.el-tabs { display: flex; align-items: center; gap: 5px; height: 24px; margin-bottom: 7px; white-space: nowrap; }
.el-tabs i { width: 1px; height: 24px; background: #ddd; }
.el-tabs .on { color: #1e66d0; }
.elements label { display: flex; align-items: center; gap: 4px; height: 21px; padding: 0 9px 0 4px; margin-left: 3px; }
.el-hot { display: flex; align-items: center; gap: 18px; }
.hot { background: #b5bac5; }
.arrows { position: absolute; left: 1070px; top: 299px; filter: drop-shadow(2px 3px 2px rgba(0,0,0,.5)); }

/* tick boxes and radios */
input[type=checkbox], input[type=radio] { appearance: none; width: 14px; height: 14px; border: 1px solid #8b8d91; border-radius: 3px; background: transparent; display: grid; place-items: center; flex: none; }
input[type=radio] { border-radius: 50%; }
input[type=checkbox]:checked::after { content: ""; width: 8px; height: 4px; border: solid #2a3040; border-width: 0 0 2px 2px; transform: translateY(-1px) rotate(-45deg); }
input[type=radio]:checked { border-color: #0f6bff; }
input[type=radio]:checked::after { content: ""; width: 6px; height: 6px; border-radius: 3px; background: #0f6bff; }
.elements input[type=checkbox] { border-color: #a9abb0; border-radius: 2px; }
.elements .hot input[type=checkbox] { border-color: #2a3040; }
.form input[type=checkbox]:checked { background: #0f6bff; border-color: #0f6bff; }
.form input[type=checkbox]:checked::after { border-color: #fff; }
input[type=checkbox]:disabled { border-color: #c9cbcf; }

/* scroll bars and sheet tabs */
.vscroll { width: 17px; background: #ebecf0; display: flex; flex-direction: column; align-items: center; padding-bottom: 9px; }
.vscroll .head { width: 100%; height: 31px; background: #eee; border-bottom: 1px solid #d8d8d8; }
.vscroll .dash { width: 8px; height: 2px; background: #aaa; margin: 6px 0 8px; }
.thumb-v { width: 8px; margin: 9px 0 46px; flex: 1; border-radius: 4px; background: #d0d1d5; }
.sheetbar { height: 26px; flex: none; border-top: 1px solid #d2d2d4; background: #ecedf0; display: flex; align-items: flex-start; }
.nav-btns { width: 102px; height: 24px; display: flex; align-items: center; gap: 12px; padding-left: 14px; }
.nav-btns svg { fill: none; stroke: #9b9b9e; stroke-width: 1.6; }
.sheet-tab { width: 81px; height: 24px; margin-top: -1px; background: #fff; color: #0b7f6b; font: 700 16px/22px "Noto Sans", sans-serif; border-radius: 0 0 5px 5px; border-bottom: 1px solid #ccc; }
.add-sheet { width: 24px; height: 24px; }
.hscroll { flex: 0 1 40.1%; margin-left: auto; margin-right: 17px; height: 24px; display: flex; align-items: center; gap: 9px; }
.hscroll .bar { width: 1px; height: 8px; background: #999; margin: 0 3px; }
.track { flex: 1; padding-right: 51px; }
.thumb-h { display: block; height: 8px; border-radius: 4px; background: #cdced1; }

/* properties pane */
.pane { width: 321px; flex: none; border-left: 1px solid #cfd1d5; padding: 16px 16px 0; background: linear-gradient(100deg, #eaeef4, #e9eef1 50%, #ebecf1); overflow: hidden; }
.pane-title { display: flex; align-items: center; height: 18px; padding: 0 6px 0 4px; font-size: 14px; gap: 6px; }
.pane-title .pin { margin-left: auto; margin-right: 9px; }
.segment { display: flex; height: 31px; margin-top: 14px; padding: 2px; border-radius: 6px; background: #dde0e3; }
.segment button { flex: 1; border-radius: 5px; color: #555; gap: 8px; }
.segment .on { background: #fff; color: #1f2124; font-weight: 700; }
.pane-tabs { display: flex; gap: 16px; margin-top: 15px; padding-left: 1px; line-height: 22px; white-space: nowrap; }
.pane-tabs .on { color: #0b7f6b; font-weight: 700; display: flex; flex-direction: column; align-items: center; }
.pane-tabs .on::after { content: ""; width: 24px; height: 2px; background: #0b7f6b; }
.sec { margin: 42px 0 0; font-size: 12px; line-height: 16px; font-weight: 700; display: flex; align-items: center; gap: 6px; padding-left: 3px; }
.sec::before { content: ""; width: 6px; height: 8px; background: #75777a; clip-path: polygon(0 0, 100% 50%, 0 100%); }
.sec.open { margin: 17px 0 23px; gap: 5px; }
.sec.open::before { width: 7px; height: 6px; clip-path: polygon(0 0, 100% 0, 50% 100%); }
.form { padding-left: 12px; }
.form h3 { margin: 0; font-size: 12px; line-height: 16px; font-weight: 700; padding: 0 0 11px; }
.line { display: flex; align-items: center; height: 24px; margin-bottom: 8px; }
.line + h3 { margin-top: 20px; }
.line label { display: flex; align-items: center; gap: 4px; margin-right: auto; white-space: nowrap; }
.line .strong { font-weight: 700; }
.line.opt { padding-left: 6px; }
.line .base { margin: 0 8px 0 auto; }
.line.end label { margin: 0 6px 0 auto; color: #999; }
.line.unit { margin-top: 16px; }
.line.gap { margin-top: 16px; }
.line.gap + .gap { margin-bottom: 0; }
.box { width: 72px; height: 24px; border: 1px solid #c9cbcf; border-bottom-color: #a6a8ac; border-radius: 4px; background: #fff; padding: 0 9px; font-size: 13px; }
.box.wide { width: 108px; }
.box:disabled { background: transparent; color: #999; border-color: #cfd1d4; }
.auto { margin: 0 8px 0 12px; }
.form + .sec { margin-top: 36px; }
.rail { width: 56px; flex: none; border-left: 1px solid #cfd1d5; display: flex; flex-direction: column; align-items: center; gap: 8px; padding-top: 16px; }
.rail button { width: 32px; height: 32px; border-radius: 5px; }
.rail .fold { height: 16px; }
.rail .on { background: #d3d5d8; }

/* status bar */
.status { height: 24px; flex: none; border-top: 1px solid #cfd1d4; display: flex; align-items: center; padding: 0 17px 0 15px; background: #ebedf1; }
.status-right { margin-left: auto; display: flex; align-items: center; }
.s-focus { margin: 0 15px 0 19px; gap: 4px; }
.status .view { width: 24px; height: 23px; margin-left: 8px; }
.view.on { background: #d2d4d7; border-radius: 4px; }
.view + .vsep { margin: 0 15px 0 8px; }
.pct { font-size: 13px; gap: 11px; margin-right: 17px; }
.zoom { appearance: none; width: 106px; height: 14px; margin: 0 14px; background: linear-gradient(90deg, #1f62c9 58%, #bfc1c5 58%) center / 100% 2px no-repeat; }
.zoom::-webkit-slider-thumb { appearance: none; width: 12px; height: 12px; border-radius: 50%; border: 3px solid #fff; background: #888; box-shadow: 0 0 2px #888; }
.full { margin-left: 20px; }

/* overlays */
.ime { position: absolute; right: 3px; bottom: 80px; height: 27px; width: 61px; background: #fff; border-radius: 5px; box-shadow: 0 0 4px 1px rgba(0,0,0,.6); display: flex; align-items: center; justify-content: center; gap: 3px; color: #444; font-size: 13px; }
.mark { position: absolute; right: 11px; bottom: 9px; display: flex; align-items: center; }
.mark div { display: flex; flex-direction: column; }
.mark b { font: 500 21px/22px "Noto Sans CJK SC", sans-serif; color: #5f9bd8; }
.mark span { font: 17px/19px "Liberation Sans", sans-serif; color: #56bd7c; }
```
